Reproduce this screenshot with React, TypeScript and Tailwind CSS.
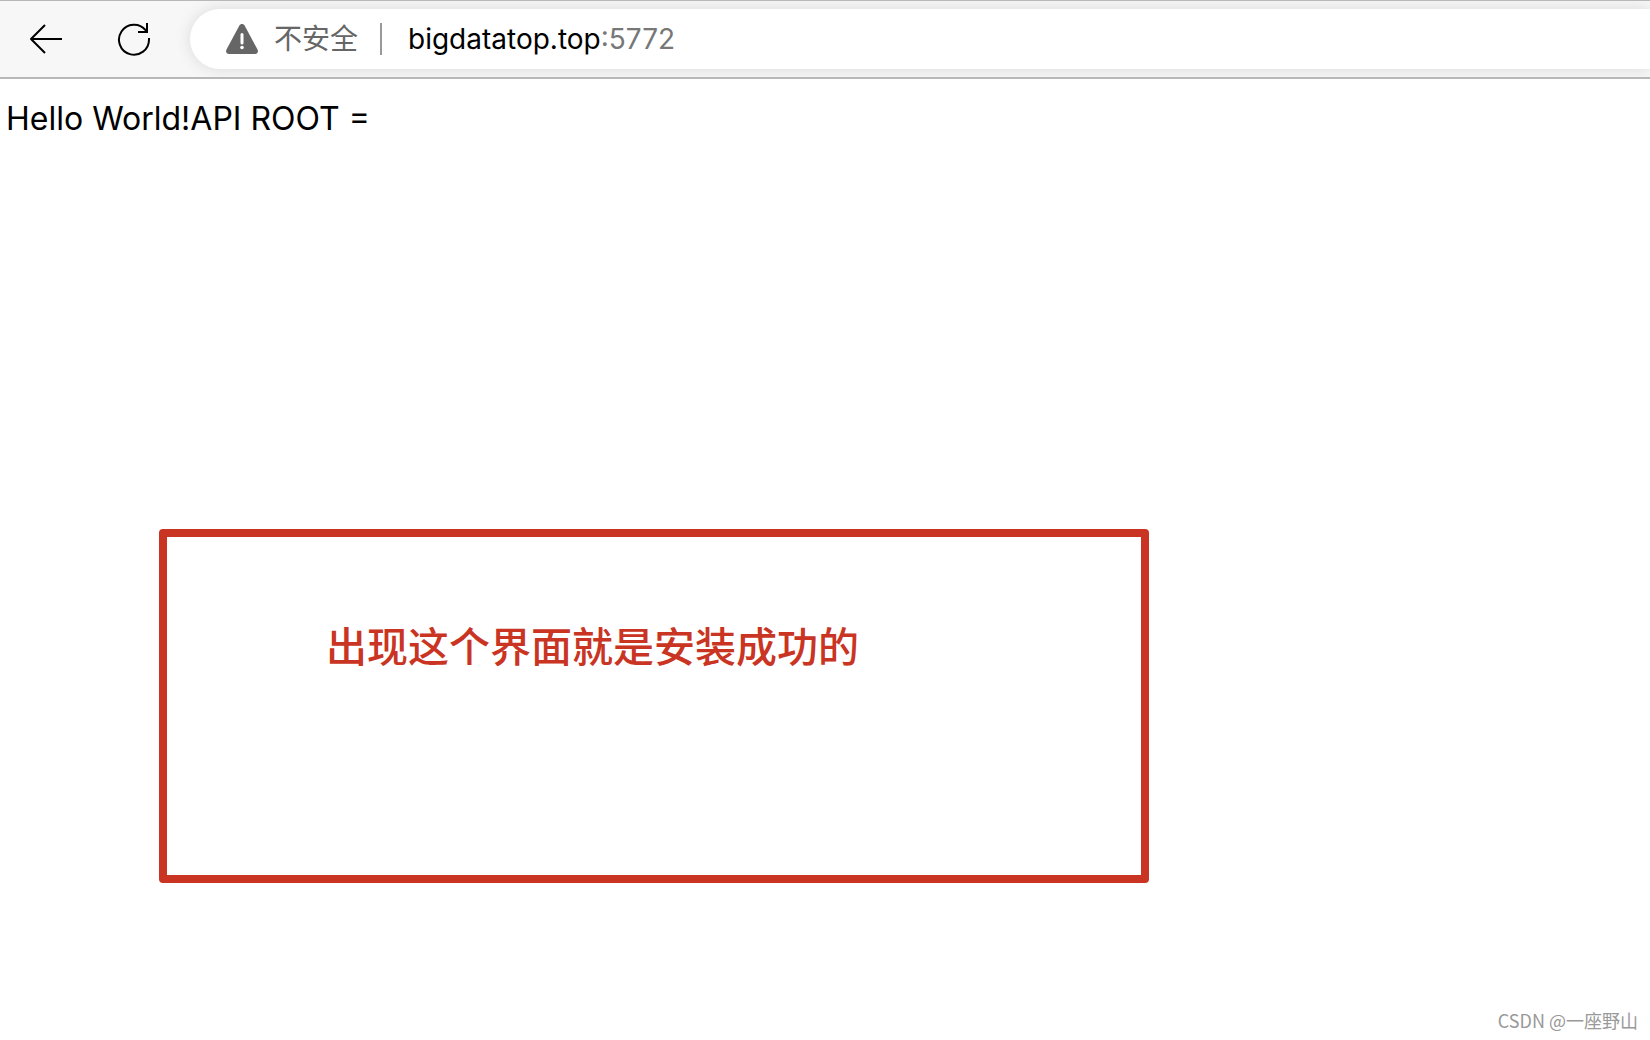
const BackIcon = () => (
  <svg width="34" height="30" viewBox="0 0 34 30" fill="none" stroke="#000" strokeWidth="2">
    <path d="M16 1 L2 15 L16 29 M2 15 H33" strokeLinejoin="round" />
  </svg>
);

const ReloadIcon = () => (
  <svg width="34" height="34" viewBox="0 0 34 34" fill="none" stroke="#000" strokeWidth="2">
    <path d="M32 16 V17.5 A15 15 0 1 1 28.6 8.2 L30 10" />
    <path d="M30 1 V10 H21" />
  </svg>
);

const WarningIcon = () => (
  <svg width="32" height="30" viewBox="0 0 32 30">
    <path
      d="M13.4 1.6 C14.6 -0.4 17.4 -0.4 18.6 1.6 L31.5 25.5 C32.5 27.8 31.5 30 29 30 H3 C0.5 30 -0.5 27.8 0.5 25.5 Z"
      fill="#666"
    />
    <path d="M16 10.5 V19" stroke="#fff" strokeWidth="3" strokeLinecap="round" />
    <circle cx="16" cy="23.5" r="1.8" fill="#fff" />
  </svg>
);

const Toolbar = () => {
  return (
    <header className="flex items-center overflow-hidden border-t border-b-2 border-t-[#b8b8b8] border-b-[#b8b8b8] bg-[#f7f7f7] py-2">
      <button type="button" aria-label="Back" className="ml-7 shrink-0 pl-px">
        <BackIcon />
      </button>
      <button type="button" aria-label="Reload" className="ml-[54px] shrink-0">
        <ReloadIcon />
      </button>
      <div className="ml-[39px] flex h-15 grow items-center rounded-l-full bg-white pl-9 shadow-[0_0_16px_rgba(0,0,0,0.12)]">
        <button
          type="button"
          className="flex shrink-0 items-center gap-4 text-[28px] leading-10 text-[#666]"
        >
          <WarningIcon />
          不安全
        </button>
        <span className="mr-[26px] ml-[22px] h-8 w-0.5 shrink-0 bg-[#999]" />
        <div className="flex grow items-center text-[28px] leading-10">
          <input
            aria-label="Host"
            defaultValue="bigdatatop.top"
            className="field-sizing-content text-black outline-none"
          />
          <input
            aria-label="Port"
            defaultValue=":5772"
            className="field-sizing-content text-[#777] outline-none"
          />
        </div>
      </div>
    </header>
  );
};

const App = () => {
  return (
    <div className="flex min-h-screen flex-col bg-white font-[Inter,'Noto_Sans_CJK_SC',sans-serif]">
      <Toolbar />
      <main className="pt-4">
        <p className="px-1.5 text-[32px] leading-12 text-black">Hello World!API ROOT =</p>
        <section className="mt-[386px] ml-[159px] w-3/5 rounded border-8 border-[#c93423] px-[159px] pt-[86px] pb-[204px]">
          <p className="text-[41px] leading-12 font-medium text-[#c93423]">
            出现这个界面就是安装成功的
          </p>
        </section>
      </main>
      <footer className="mt-auto px-3 pb-1.5 text-right font-['Noto_Sans_CJK_SC',sans-serif] text-[18px] leading-7 text-[#999]">
        CSDN @一座野山
      </footer>
    </div>
  );
};

export default App;
